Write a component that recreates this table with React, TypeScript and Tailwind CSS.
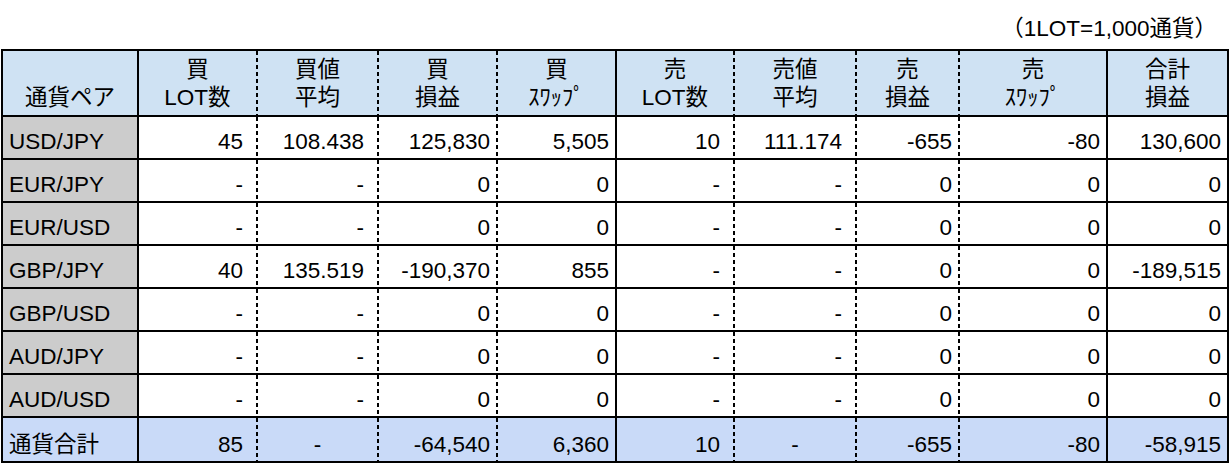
import React from "react";

type Div = "solid" | "dashed" | "none";

const dividers: Div[] = ["solid", "dashed", "dashed", "dashed", "solid", "dashed", "dashed", "dashed", "solid", "none"];
const widePad = [false, true, true, false, false, true, true, false, false, false];

const headers: string[][] = [
  ["通貨ペア"],
  ["買", "LOT数"],
  ["買値", "平均"],
  ["買", "損益"],
  ["買", "ｽﾜｯﾌﾟ"],
  ["売", "LOT数"],
  ["売値", "平均"],
  ["売", "損益"],
  ["売", "ｽﾜｯﾌﾟ"],
  ["合計", "損益"],
];

const rows: string[][] = [
  ["USD/JPY", "45", "108.438", "125,830", "5,505", "10", "111.174", "-655", "-80", "130,600"],
  ["EUR/JPY", "-", "-", "0", "0", "-", "-", "0", "0", "0"],
  ["EUR/USD", "-", "-", "0", "0", "-", "-", "0", "0", "0"],
  ["GBP/JPY", "40", "135.519", "-190,370", "855", "-", "-", "0", "0", "-189,515"],
  ["GBP/USD", "-", "-", "0", "0", "-", "-", "0", "0", "0"],
  ["AUD/JPY", "-", "-", "0", "0", "-", "-", "0", "0", "0"],
  ["AUD/USD", "-", "-", "0", "0", "-", "-", "0", "0", "0"],
];

const total = ["通貨合計", "85", "-", "-64,540", "6,360", "10", "-", "-655", "-80", "-58,915"];

function Divider({ kind }: { kind: Div }) {
  if (kind === "none") return null;
  if (kind === "solid") return <div className="w-[2px] shrink-0 bg-black" />;
  return (
    <div className="w-[2px] shrink-0 bg-[repeating-linear-gradient(to_bottom,#000_0px,#000_4px,transparent_4px,transparent_7px)]" />
  );
}

function HeaderCell({ lines, i }: { lines: string[]; i: number }) {
  return (
    <div className="flex h-[66px] border-b-2 border-black bg-[#cfe2f3]">
      <div className="flex flex-1 flex-col items-center justify-end pb-[3px] leading-[28px]">
        {lines.map((l, k) => (
          <div key={k} className="whitespace-nowrap">
            {l}
          </div>
        ))}
      </div>
      <Divider kind={dividers[i]} />
    </div>
  );
}

function BodyCell({
  value,
  i,
  last,
  isTotal,
}: {
  value: string;
  i: number;
  last: boolean;
  isTotal: boolean;
}) {
  const first = i === 0;
  const centered = isTotal && (i === 2 || i === 6);
  const bg = isTotal ? "bg-[#c9daf8]" : first ? "bg-[#cccccc]" : "bg-white";
  const align = first
    ? "justify-start pl-[6px]"
    : centered
    ? "justify-center"
    : widePad[i]
    ? "justify-end pr-[13px]"
    : "justify-end pr-[6px]";
  return (
    <div className={`flex h-[43px] ${last ? "h-[41px]" : "border-b-2 border-black"} ${bg}`}>
      <div className={`flex flex-1 items-end pb-[4px] leading-[25px] whitespace-nowrap ${align}`}>{value}</div>
      <Divider kind={dividers[i]} />
    </div>
  );
}

export default function App() {
  return (
    <div className="h-[464px] w-[1231px] bg-white font-['Liberation_Sans','Noto_Sans_CJK_JP',sans-serif] text-[22.5px] text-black">
      <div className="flex h-[49px] w-[1229px] items-start justify-end pt-[16px] pr-[12px] leading-[25px]">
        （1LOT=1,000通貨）
      </div>
      <div className="ml-[1px] w-[1228px] border-2 border-black">
        <div className="grid grid-cols-[136px_119px_121px_119px_119px_118px_122px_103px_148px_119px]">
          {headers.map((h, i) => (
            <HeaderCell key={i} lines={h} i={i} />
          ))}
          {rows.map((r, ri) =>
            r.map((v, i) => <BodyCell key={`${ri}-${i}`} value={v} i={i} last={false} isTotal={false} />)
          )}
          {total.map((v, i) => (
            <BodyCell key={`t-${i}`} value={v} i={i} last={true} isTotal={true} />
          ))}
        </div>
      </div>
    </div>
  );
}
